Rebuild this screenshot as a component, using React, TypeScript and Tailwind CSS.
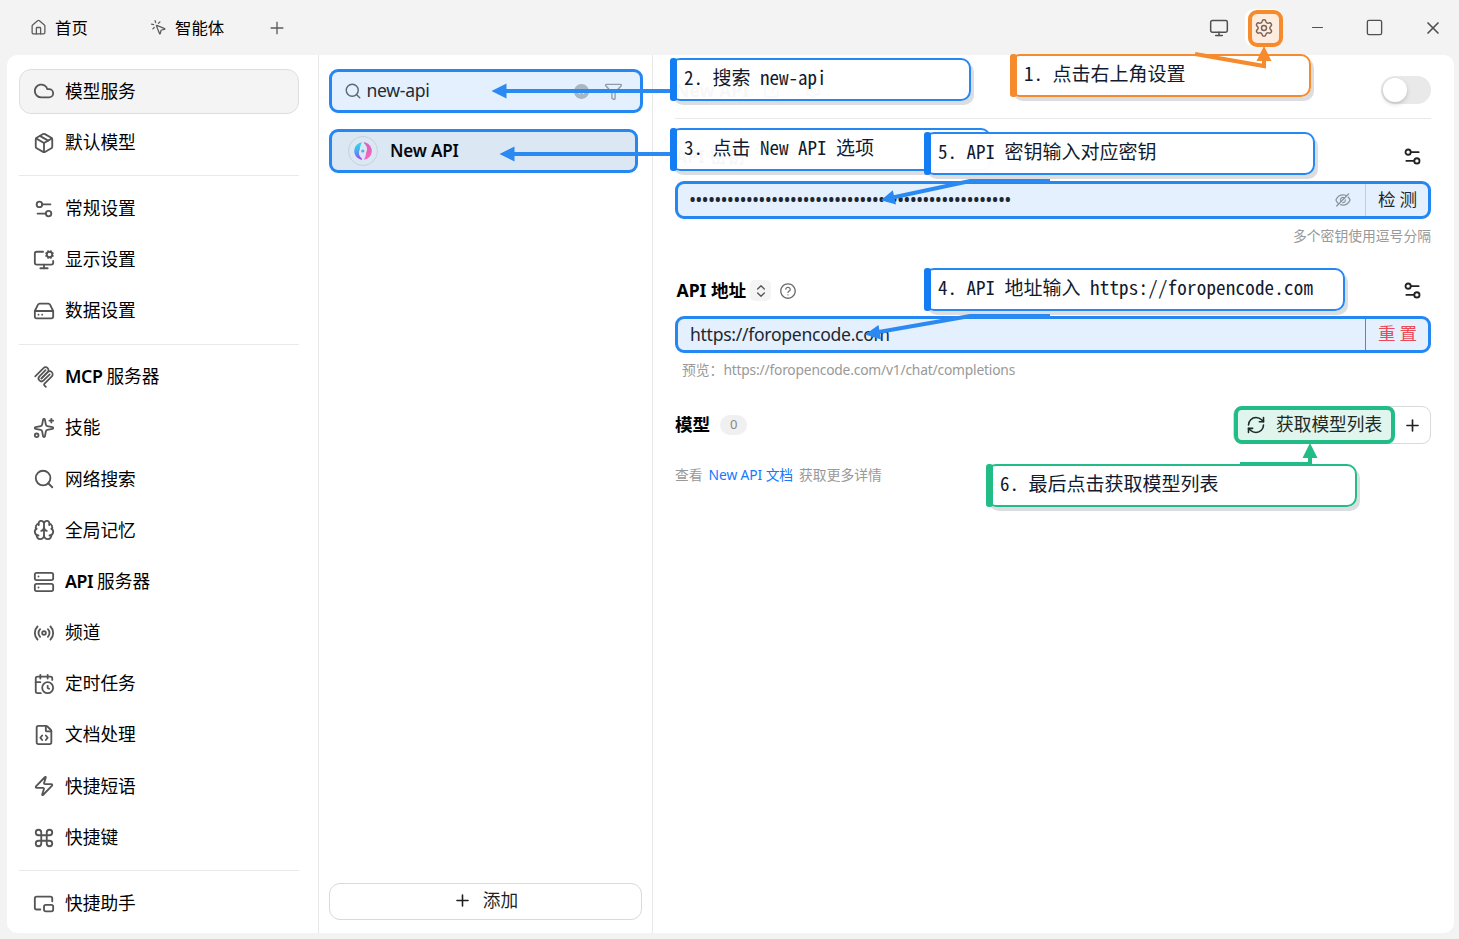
import React from 'react';
import {
  Brain,
  CalendarClock,
  ChevronsUpDown,
  Cloud,
  Command,
  FileCode,
  Funnel,
  HardDrive,
  House,
  Minus,
  Monitor,
  MonitorCog,
  MousePointerClick,
  Package,
  PictureInPicture2,
  Plus,
  Radio,
  RefreshCw,
  Search,
  Server,
  Settings,
  Settings2,
  Sparkles,
  Square,
  SquareArrowOutUpRight,
  X,
  Zap,
} from 'lucide-react';
import { AiFillCloseCircle, AiOutlineEyeInvisible, AiOutlinePlus, AiOutlineQuestionCircle } from 'react-icons/ai';

const McpIcon: React.FC<{ className?: string }> = ({ className }) => (
  <svg viewBox="0 0 180 180" fill="none" stroke="currentColor" strokeWidth="14" strokeLinecap="round" className={className}>
    <path d="M18 84.8528L85.8822 16.9706C95.2548 7.59798 110.451 7.59798 119.823 16.9706C129.196 26.3431 129.196 41.5391 119.823 50.9117L68.5581 102.177" />
    <path d="M69.2652 101.47L119.823 50.9117C129.196 41.5391 144.392 41.5391 153.765 50.9117L154.118 51.2652C163.491 60.6378 163.491 75.8338 154.118 85.2063L92.7248 146.6C89.6006 149.724 89.6006 154.789 92.7248 157.913L105.331 170.52" />
    <path d="M102.853 33.9411L52.6482 84.1457C43.2756 93.5183 43.2756 108.714 52.6482 118.087C62.0208 127.459 77.2167 127.459 86.5893 118.087L136.794 67.8822" />
  </svg>
);

const NewApiLogo = () => (
  <svg viewBox="0 0 20 20" className="h-[20px] w-[20px]">
    <defs>
      <linearGradient id="logoLeft" x1="0" y1="0" x2="0" y2="1">
        <stop offset="0" stopColor="#2be0e6" />
        <stop offset="0.5" stopColor="#4aa8f0" />
        <stop offset="1" stopColor="#a63df5" />
      </linearGradient>
      <linearGradient id="logoRight" x1="0" y1="0" x2="0" y2="1">
        <stop offset="0" stopColor="#d565c8" />
        <stop offset="0.5" stopColor="#ea62b4" />
        <stop offset="1" stopColor="#f768cf" />
      </linearGradient>
    </defs>
    <path d="M9.2 1.2A8.9 8.9 0 0 0 7.6 18.6C9 19 9.6 18.3 8.8 17.4C5.6 14.6 5.4 11.6 6.6 9C7.4 7.2 6.6 5 9.2 1.2Z" fill="url(#logoLeft)" />
    <path d="M10.8 18.8A8.9 8.9 0 0 0 12.4 1.4C11 1 10.4 1.7 11.2 2.6C14.4 5.4 14.6 8.4 13.4 11C12.6 12.8 13.4 15 10.8 18.8Z" fill="url(#logoRight)" />
    <circle cx="9.8" cy="10" r="1.6" fill="#4fa9ee" />
  </svg>
);

const menuGroups = [
  [
    { label: '模型服务', icon: Cloud, active: true },
    { label: '默认模型', icon: Package },
  ],
  [
    { label: '常规设置', icon: Settings2 },
    { label: '显示设置', icon: MonitorCog },
    { label: '数据设置', icon: HardDrive },
  ],
  [
    { prefix: 'MCP', label: '服务器', icon: McpIcon },
    { label: '技能', icon: Sparkles },
    { label: '网络搜索', icon: Search },
    { label: '全局记忆', icon: Brain },
    { prefix: 'API', label: '服务器', icon: Server },
    { label: '频道', icon: Radio },
    { label: '定时任务', icon: CalendarClock },
    { label: '文档处理', icon: FileCode },
    { label: '快捷短语', icon: Zap },
    { label: '快捷键', icon: Command },
  ],
  [{ label: '快捷助手', icon: PictureInPicture2 }],
];

const TitleBar = () => (
  <header className="flex h-[55px] shrink-0 items-center text-[16.4px] text-black">
    <div className="flex w-[119px] items-center gap-[8px] pl-[30px]">
      <House className="h-[17px] w-[17px] text-[#5c5c5c]" strokeWidth={1.8} />
      <span className="pt-[2px]">首页</span>
    </div>
    <div className="flex w-[143px] items-center gap-[8px] pl-[31px]">
      <MousePointerClick className="h-[17px] w-[17px] text-[#5c5c5c]" strokeWidth={1.8} />
      <span className="pt-[2px]">智能体</span>
    </div>
    <AiOutlinePlus className="ml-[6px] h-[18px] w-[18px] text-[#5c5c5c]" />
    <div className="ml-auto flex items-center text-[#505050]">
      <Monitor className="mr-[16px] h-[20px] w-[20px]" strokeWidth={1.8} />
      <div className="flex h-[38px] w-[38px] items-end justify-end rounded-[9px] bg-white">
        <div className="flex h-[37px] w-[35px] items-center justify-center rounded-[9px] border-4 border-[#f58b2c] bg-[#feecdf] pr-[3px] text-[#766259]">
          <Settings className="h-[20px] w-[20px] shrink-0" strokeWidth={1.7} />
        </div>
      </div>
      <div className="flex w-[57px] justify-center pl-[12px]"><Minus className="h-[17px] w-[17px]" strokeWidth={1.7} /></div>
      <div className="flex w-[57px] justify-center pl-[12px]"><Square className="h-[19px] w-[19px]" strokeWidth={1.7} /></div>
      <div className="flex w-[62px] justify-center pl-[9px]"><X className="h-[20px] w-[20px]" strokeWidth={2} /></div>
    </div>
  </header>
);

const Sidebar = () => (
  <nav className="flex w-[312px] shrink-0 flex-col gap-[6.4px] border-r border-[#e7e7e7] pt-[14px] pr-[19px] pl-[12px]">
    {menuGroups.map((group, i) => (
      <React.Fragment key={i}>
        {i > 0 && <div className="mt-[4.1px] mb-[3.3px] h-px shrink-0 bg-[#e9e9e9]" />}
        {group.map(({ prefix, label, icon: Icon, active }: any) => (
          <div
            key={(prefix ?? '') + label}
            className={`flex h-[44.8px] shrink-0 items-center rounded-[12px] border pb-px pl-[13px] text-[17.7px] text-black ${
              active ? 'border-[#dedede] bg-[#f4f4f4]' : 'border-transparent'
            }`}
          >
            <Icon className="mt-px mr-[10px] h-[22px] w-[22px] text-[#555]" strokeWidth={2} />
            {prefix && <span className="mr-[4px] font-semibold tracking-[-0.4px]">{prefix}</span>}
            {label}
          </div>
        ))}
      </React.Fragment>
    ))}
  </nav>
);

const ProviderList = () => (
  <section className="flex w-[334px] shrink-0 flex-col border-r border-[#e7e7e7] pt-[14px] pb-[13px] pl-[10px]">
    <div className="flex h-[44px] w-[314px] items-center rounded-[9px] border-3 border-[#2587f2] bg-[#e4f0fd] pr-[17px] pl-[12px]">
      <Search className="h-[18px] w-[18px] text-[#5d6873]" strokeWidth={1.9} />
      <span className="ml-[4.5px] pb-px text-[17.6px] tracking-[-0.3px] text-[#222b34]">new-api</span>
      <AiFillCloseCircle className="ml-auto h-[17px] w-[17px] text-[#a9b6c3]" />
      <Funnel className="ml-[14px] h-[19px] w-[19px] text-[#909ba6]" strokeWidth={1.7} />
    </div>
    <div className="mt-[16px] flex h-[44px] w-[309px] items-center rounded-[9px] border-3 border-[#2587f2] bg-[#dce7f4] pl-[16px]">
      <div className="flex h-[30px] w-[30px] items-center justify-center rounded-full border border-[#c6d1df]">
        <NewApiLogo />
      </div>
      <span className="ml-[12px] text-[17px] font-semibold tracking-[-0.15px] text-[#05080c]">New API</span>
    </div>
    <button className="mt-auto flex h-[37px] w-[313px] items-center justify-center gap-[11px] rounded-[11px] border border-[#d9d9d9] bg-white pb-[2px] text-[17.7px] text-[#1f1f1f]">
      <Plus className="h-[19px] w-[19px]" strokeWidth={2} />
      添加
    </button>
  </section>
);

const ProviderSettings = () => (
  <section className="flex grow flex-col pr-[23px] pl-[22px] text-[17.6px]">
    <div className="flex h-[64px] items-center border-b border-[#e9e9e9] pt-[7px] font-bold">
      New API
      <SquareArrowOutUpRight className="ml-[14px] h-[17px] w-[17px]" />
      <Settings className="ml-[24px] h-[18px] w-[18px]" />
      <div className="ml-auto flex h-[28px] w-[50px] items-center rounded-full bg-[#e9e9e9] pl-[2px]">
        <div className="h-[24px] w-[24px] rounded-full bg-white shadow-[0_2px_4px_rgba(0,35,11,0.2)]" />
      </div>
    </div>
    <div className="mt-[12px] flex h-[50px] items-center justify-between font-bold">
      API 密钥
      <Settings2 className="mr-[8.5px] h-[21px] w-[21px] text-[#222]" strokeWidth={2.1} />
    </div>
    <div className="flex h-[38px] items-center rounded-[9px] border-3 border-[#2587f2] bg-[#e4f0fd] text-[#1e2730]">
      <span className="pl-[11px] text-[19px] tracking-[-0.84px]">{'•'.repeat(51)}</span>
      <AiOutlineEyeInvisible className="mr-[13px] ml-auto h-[18px] w-[18px] text-[#8a949e]" />
      <div className="flex h-full w-[63px] items-center justify-center border-l border-[#bfcddd] pb-[2px] pl-[5px] tracking-[4px]">检测</div>
    </div>
    <div className="flex h-[34px] items-center justify-end text-[13.8px] text-[#999]">多个密钥使用逗号分隔</div>
    <div className="mt-[13px] flex h-[50px] items-center pb-px pl-[1.5px] font-bold">
      API 地址
      <div className="ml-[4px] flex h-[21px] w-[21px] items-center justify-center rounded-[5px] bg-[#f4f4f4]">
        <ChevronsUpDown className="h-[16px] w-[16px] text-[#555]" strokeWidth={2} />
      </div>
      <AiOutlineQuestionCircle className="ml-[7.500px] h-[18px] w-[18px] text-[#6b6b6b]" />
      <Settings2 className="mr-[8.5px] ml-auto h-[21px] w-[21px] text-[#222]" strokeWidth={2.1} />
    </div>
    <div className="flex h-[37px] items-center rounded-[9px] border-3 border-[#2587f2] bg-[#e4f0fd]">
      <span className="grow pl-[12px] tracking-[-0.3px] text-[#1e2730]">https://foropencode.com</span>
      <div className="flex h-full w-[63px] items-center justify-center border-l border-[#e05566] pb-[2px] pl-[5px] tracking-[4px] text-[#ea4b59]">重置</div>
    </div>
    <div className="flex h-[34px] items-center pl-[7px] text-[13.8px] text-[#999]">
      预览：<span className="tracking-[-0.19px]">https://foropencode.com/v1/chat/completions</span>
    </div>
    <div className="mt-[19px] flex h-[38px] items-center">
      <span className="pb-px font-bold">模型</span>
      <span className="ml-[10px] flex h-[20px] w-[27px] items-center justify-center rounded-full bg-[#f0f0f0] text-[13px] text-[#888]">0</span>
      <div className="ml-auto flex h-[38px] rounded-[9px] border border-[#d9d9d9]">
        <div className="-my-px flex w-[161px] items-center rounded-[8px] border-4 border-[#22bd87] bg-[#dff5ee] pl-[8px] text-[#1c2a25]">
          <RefreshCw className="mr-[10px] h-[20px] w-[20px]" strokeWidth={1.9} />
          <span className="pb-[2px] text-[17.7px]">获取模型列表</span>
        </div>
        <div className="flex w-[35px] items-center justify-center pr-px text-[#222]">
          <Plus className="h-[19px] w-[19px]" strokeWidth={2.1} />
        </div>
      </div>
    </div>
    <div className="mt-[20px] flex h-[22px] items-center gap-[6px] text-[13.8px] text-[#999]">
      查看<span className="tracking-[-0.1px] text-[#1677ff]">New API 文档</span>获取更多详情
    </div>
  </section>
);

interface CalloutProps {
  place: string;
  tone: string;
  bar: string;
  children: React.ReactNode;
}

const Callout: React.FC<CalloutProps> = ({ place, tone, bar, children }) => (
  <div
    className={`absolute flex h-[43px] items-center rounded-[10px] border-2 bg-white/97 pb-[5px] pl-[12px] font-['Noto_Sans_Mono_CJK_SC','Noto_Sans_CJK_SC',monospace] text-[19px] whitespace-pre text-[#111a2e] shadow-[3px_4px_0_#dcdde0] [font-feature-settings:'hwid'] ${place} ${tone}`}
  >
    <div className={`absolute -top-[2px] -left-[2px] h-[43px] w-[7px] rounded-[3px] ${bar}`} />
    {children}
  </div>
);

const Arrows = () => (
  <svg className="pointer-events-none absolute inset-0" width="1459" height="939" fill="none" strokeWidth="4">
    <g stroke="#2b8af2">
      <path d="M670 91H500M670 154H508" />
      <path d="M1050 181H970L888 198.5M1050 316H970L873 333" />
    </g>
    <g fill="#2b8af2">
      <path d="M491.500 91L506.500 83.500V98.500Z" />
      <path d="M499.500 154L514.500 146.500V161.500Z" />
      <path d="M881 200.200L892.800 190.200L896 204.500Z" />
      <path d="M865 334.500L878.500 325L881 339.500Z" />
    </g>
    <path d="M1195 54L1264 66V50" stroke="#f58b2c" />
    <path d="M1264 46L1271.500 61H1256.500Z" fill="#f58b2c" />
    <path d="M1240 464H1310V450" stroke="#22bd87" />
    <path d="M1310 443L1317.500 458H1302.500Z" fill="#22bd87" />
  </svg>
);

const App: React.FC = () => {
  return (
    <div className="relative flex h-[939px] w-[1459px] flex-col overflow-hidden bg-[#f3f3f3] font-['Noto_Sans','Noto_Sans_CJK_SC',sans-serif]">
      <TitleBar />
      <main className="mr-[5px] mb-[6px] ml-[7px] flex min-h-0 grow overflow-hidden rounded-[10px] bg-white">
        <Sidebar />
        <ProviderList />
        <ProviderSettings />
      </main>

      <Callout place="left-[1010px] top-[54px] w-[301px]" tone="border-[#f58b2c]" bar="bg-[#f58b2c]">1. 点击右上角设置</Callout>
      <Callout place="left-[670px] top-[58px] w-[301px]" tone="border-[#2587f2]" bar="bg-[#147df3]">2. 搜索 new-api</Callout>
      <Callout place="left-[670px] top-[128px] w-[321px]" tone="border-[#2587f2]" bar="bg-[#147df3]">3. 点击 New API 选项</Callout>
      <Callout place="left-[924px] top-[268px] w-[421px]" tone="border-[#2587f2]" bar="bg-[#147df3]">
        4. API 地址输入 <span className="tracking-[0.2px]">https://foropencode.com</span>
      </Callout>
      <Callout place="left-[924px] top-[132px] w-[391px]" tone="border-[#2587f2]" bar="bg-[#147df3]">5. API 密钥输入对应密钥</Callout>
      <Callout place="left-[986px] top-[464px] w-[371px]" tone="border-[#22bd87]" bar="bg-[#22bd87]">6. 最后点击获取模型列表</Callout>
      <Arrows />
    </div>
  );
};

export default App;
